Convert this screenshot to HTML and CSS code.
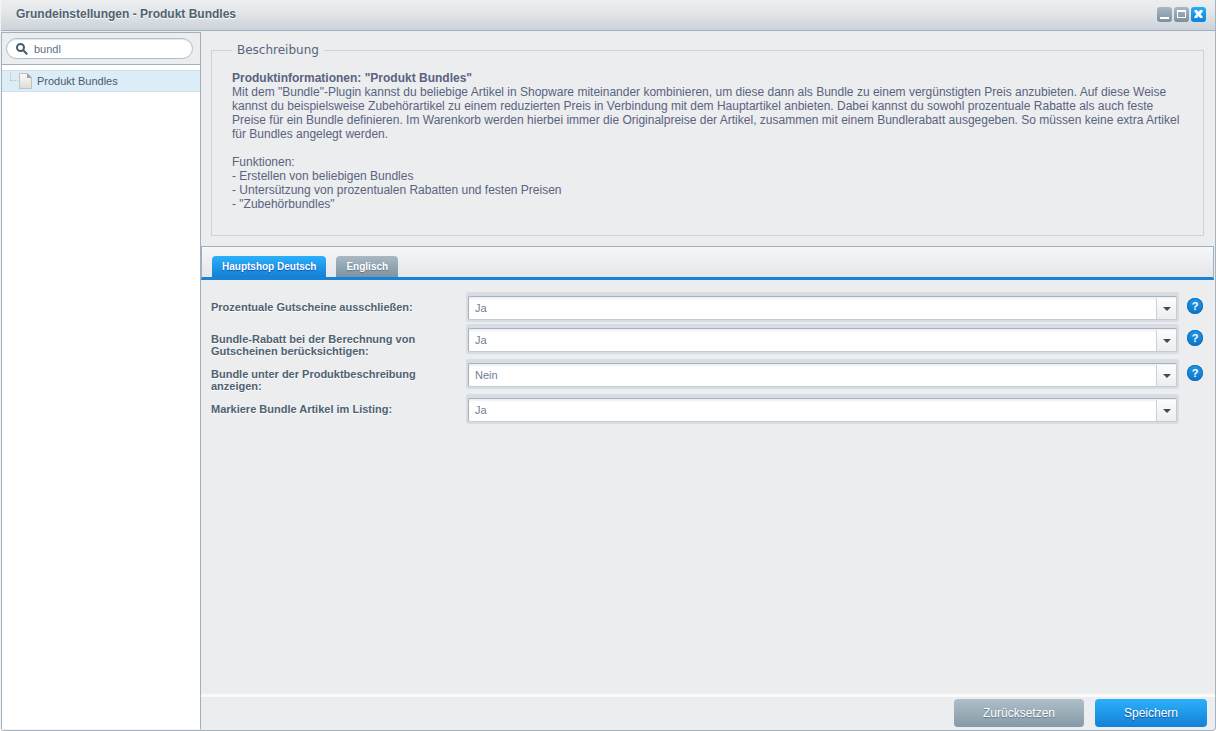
FILE: index.html
```html
<!DOCTYPE html>
<html lang="de">
<head>
<meta charset="utf-8">
<title>Grundeinstellungen - Produkt Bundles</title>
<link rel="stylesheet" href="styles.css">
</head>
<body>
<div class="window">
  <header class="titlebar">
    <h1 class="title">Grundeinstellungen - Produkt Bundles</h1>
    <div class="tools">
      <button class="tool" type="button" aria-label="Minimieren"><svg viewBox="0 0 15 15"><path d="M3 10h9v2H3z"/></svg></button>
      <button class="tool" type="button" aria-label="Maximieren"><svg viewBox="0 0 15 15"><path fill-rule="evenodd" d="M3 3h9v8H3zM4 5v5h7V5z"/></svg></button>
      <button class="tool tool-close" type="button" aria-label="Schließen"><svg viewBox="0 0 15 15"><path d="M3.500 3h2.500l1.500 2L9 3h2.500v2L9.500 7l2 2.500V11H9L7.500 9 6 11H3.500V9.500l2-2.500-2-2z"/></svg></button>
    </div>
  </header>
  <div class="body">
    <aside class="sidebar">
      <div class="searchbar">
        <label class="search">
          <svg class="search-icon" viewBox="0 0 12 12"><circle cx="4.500" cy="4.500" r="3.500"/><path d="M7.200 7.200l4 4"/></svg>
          <input class="search-input" type="text" value="bundl" aria-label="Suche">
        </label>
      </div>
      <ul class="tree">
        <li><a class="node" href="#">
          <svg class="elbow" viewBox="0 0 9 21"><path d="M.5 0v11M1 10.500h8"/></svg>
          <svg class="page" viewBox="0 0 13 16"><defs><linearGradient id="sheet" x2="0" y2="1"><stop offset="0" stop-color="#fbfbfa"/><stop offset="1" stop-color="#dcdbd8"/></linearGradient></defs><path d="M.5.5h8l4 4v11H.5z" fill="url(#sheet)" stroke="#c3c1bd"/><path d="M8 0l5 5H8z" fill="#a5a39f"/></svg>
          Produkt Bundles</a></li>
      </ul>
    </aside>
    <main class="main">
      <div class="description">
        <fieldset class="fieldset">
          <legend class="legend">Beschreibung</legend>
          <p><strong>Produktinformationen: "Produkt Bundles"</strong><br>
          Mit dem "Bundle"-Plugin kannst du beliebige Artikel in Shopware miteinander kombinieren, um diese dann als Bundle zu einem vergünstigten Preis anzubieten. Auf diese Weise kannst du beispielsweise Zubehörartikel zu einem reduzierten Preis in Verbindung mit dem Hauptartikel anbieten. Dabei kannst du sowohl prozentuale Rabatte als auch feste Preise für ein Bundle definieren. Im Warenkorb werden hierbei immer die Originalpreise der Artikel, zusammen mit einem Bundlerabatt ausgegeben. So müssen keine extra Artikel für Bundles angelegt werden.</p>
          <p>Funktionen:<br>
          - Erstellen von beliebigen Bundles<br>
          - Untersützung von prozentualen Rabatten und festen Preisen<br>
          - "Zubehörbundles"</p>
        </fieldset>
      </div>
      <div class="tabs" role="tablist">
        <button class="tab tab-active" type="button" role="tab" aria-selected="true">Hauptshop Deutsch</button>
        <button class="tab" type="button" role="tab" aria-selected="false">Englisch</button>
      </div>
      <form class="form" id="settings">
        <div class="row">
          <label class="label" for="f1">Prozentuale Gutscheine ausschließen:</label>
          <div class="combo"><select id="f1"><option selected>Ja</option><option>Nein</option></select><span class="trigger"></span></div>
          <button class="help" type="button" aria-label="Hilfe">?</button>
        </div>
        <div class="row">
          <label class="label" for="f2">Bundle-Rabatt bei der Berechnung von Gutscheinen berücksichtigen:</label>
          <div class="combo"><select id="f2"><option selected>Ja</option><option>Nein</option></select><span class="trigger"></span></div>
          <button class="help" type="button" aria-label="Hilfe">?</button>
        </div>
        <div class="row">
          <label class="label" for="f3">Bundle unter der Produktbeschreibung anzeigen:</label>
          <div class="combo"><select id="f3"><option>Ja</option><option selected>Nein</option></select><span class="trigger"></span></div>
          <button class="help" type="button" aria-label="Hilfe">?</button>
        </div>
        <div class="row">
          <label class="label" for="f4">Markiere Bundle Artikel im Listing:</label>
          <div class="combo"><select id="f4"><option selected>Ja</option><option>Nein</option></select><span class="trigger"></span></div>
        </div>
      </form>
      <footer class="footer">
        <button class="btn btn-secondary" type="reset" form="settings">Zurücksetzen</button>
        <button class="btn btn-primary" type="submit" form="settings">Speichern</button>
      </footer>
    </main>
  </div>
</div>
</body>
</html>
```
FILE: styles.css
```css
* { box-sizing: border-box; }
body {
  margin: 0;
  font: 12px/14px "Liberation Sans", Arial, sans-serif;
  color: #5a6380;
}
button, input, select { font-family: inherit; margin: 0; border: 0; padding: 0; }
svg { display: block; flex: none; }

.window {
  display: flex;
  flex-direction: column;
  min-height: 100vh;
  background: #ebedef;
  border: 1px solid #a5b3c0;
  border-top: 0;
  border-left-color: #f1f3f5;
  border-radius: 0 0 4px 4px;
}
.titlebar {
  display: flex;
  align-items: center;
  justify-content: space-between;
  height: 31px;
  padding: 0 9px 2px 15px;
  background: linear-gradient(#eceef0, #e4e7e9 40%, #cbd2d8);
  border-bottom: 1px solid #a1b0be;
}
.title {
  margin: 0;
  font-size: 12px;
  color: #4f6270;
  text-shadow: 0 1px 0 #fff;
}
.tools { display: flex; gap: 2px; }
.tool {
  width: 15px;
  height: 15px;
  border-radius: 3px;
  background: linear-gradient(#a9b8c3, #7b909f);
}
.tool svg { width: 15px; height: 15px; fill: #fff; }
.tool-close { background: linear-gradient(#25aef8, #1280d8); }

.body { display: flex; flex: 1; padding-top: 1px; }
.sidebar {
  display: flex;
  flex-direction: column;
  width: 200px;
  flex: none;
  border: 1px solid #a1b0be;
  border-bottom: 1px solid #f1f3f5;
  background: #fff;
}
.searchbar {
  padding: 5px 7px 5px 4px;
  background: #ebedef;
  border-bottom: 1px solid #a1b0be;
}
.search {
  display: flex;
  align-items: center;
  gap: 6px;
  height: 21px;
  padding: 0 9px;
  border: 1px solid #aebdca;
  border-radius: 11px;
  background: #fff;
  box-shadow: inset 0 1px 1px #e2e7eb;
}
.search-icon { width: 12px; height: 12px; fill: none; stroke: #475c6a; stroke-width: 2; }
.search-input {
  flex: 1;
  min-width: 0;
  background: none;
  font-size: 11px;
  color: #5c7386;
  outline: 0;
}
.tree { list-style: none; margin: 0; padding: 5px 0 0; }
.node {
  display: flex;
  align-items: center;
  height: 22px;
  padding: 0 0 1px 8px;
  border: 1px solid #cbe1ee;
  border-width: 1px 0;
  background: #dcedf7;
  font-size: 11px;
  line-height: 12px;
  color: #475c6a;
  text-decoration: none;
}
.elbow { width: 9px; height: 21px; fill: none; stroke: #b7c2c9; stroke-dasharray: 1 1; }
.page { width: 13px; height: 16px; margin-right: 5px; }

.main { display: flex; flex-direction: column; flex: 1; min-width: 0; }
.description { padding: 10px 11px 10px 10px; }
.fieldset {
  margin: 0;
  min-width: 0;
  padding: 13px 20px 24px;
  border: 1px solid #ccd4da;
}
.legend { padding: 0 5px; font: 12px/16px "DejaVu Sans", Verdana, sans-serif; }
.fieldset p { margin: 0 0 14px; }
.fieldset p:last-child { margin: 0; }

.tabs {
  display: flex;
  align-items: flex-end;
  gap: 10px;
  height: 34px;
  margin-right: 1px;
  padding-left: 10px;
  border: 1px solid #a1b0be;
  border-bottom: 3px solid #1a82d4;
  background: linear-gradient(#f6f7f8, #e4e6e9);
}
.tab {
  height: 21px;
  padding: 0 10px;
  border-radius: 4px 4px 0 0;
  background: linear-gradient(#a9b8c3, #7d93a3);
  font-size: 10px;
  font-weight: bold;
  color: #fff;
  text-shadow: 0 1px 1px #5f7686;
}
.tab-active {
  background: linear-gradient(#2bb0fa, #1480d6);
  text-shadow: 0 1px 1px #0c50c0;
}

.form { display: flex; flex-direction: column; gap: 2px; flex: 1; padding: 12px 12px 12px 10px; }
.row { display: flex; align-items: flex-start; }
.label {
  width: 255px;
  flex: none;
  padding: 9px 20px 0 0;
  font-size: 11px;
  line-height: 12px;
  font-weight: bold;
  color: #4f6270;
  text-shadow: 0 1px 0 #fff;
}
.combo {
  position: relative;
  flex: 1;
  padding: 4px 2px 2px;
  border-radius: 3px;
  background: #d7dde3;
}
.combo select {
  display: block;
  appearance: none;
  width: 100%;
  height: 24px;
  padding: 0 26px 0 6px;
  border: 1px solid #a6b3be;
  border-right-color: #c2ccd4;
  border-bottom-color: #c2ccd4;
  border-radius: 2px;
  background: #fff;
  box-shadow: inset 0 2px 2px #eceff1;
  font-size: 11px;
  color: #6b8196;
}
.trigger {
  position: absolute;
  top: 6px;
  right: 3px;
  bottom: 3px;
  width: 20px;
  border-left: 1px solid #c9d2d9;
  background: linear-gradient(#fcfcfc, #eceeef);
  pointer-events: none;
}
.trigger::after {
  content: "";
  position: absolute;
  left: 6px;
  top: 9px;
  border: 4px solid transparent;
  border-top-color: #3f4b55;
  border-bottom: 0;
}
.help {
  width: 16px;
  height: 16px;
  margin: 6px 0 0 8px;
  border-radius: 8px;
  background: linear-gradient(#1d9aea, #0f74c8);
  box-shadow: inset 0 0 0 1px #1572b8;
  font-size: 11px;
  line-height: 16px;
  font-weight: bold;
  color: #fff;
}
.row:last-child .combo { margin-right: 24px; }

.footer {
  display: flex;
  justify-content: flex-end;
  gap: 11px;
  padding: 2px 8px 3px;
  border-top: 3px solid #f9fafa;
}
.btn {
  height: 28px;
  border-radius: 4px;
  font-size: 12px;
  color: #fff;
}
.btn-secondary {
  width: 130px;
  background: linear-gradient(#b0bfc9, #8499a7);
  text-shadow: 0 1px 1px #5f7686;
}
.btn-primary {
  width: 112px;
  background: linear-gradient(#2bb0fa, #1480d6);
  text-shadow: 0 1px 1px #0c50a0;
}
```
